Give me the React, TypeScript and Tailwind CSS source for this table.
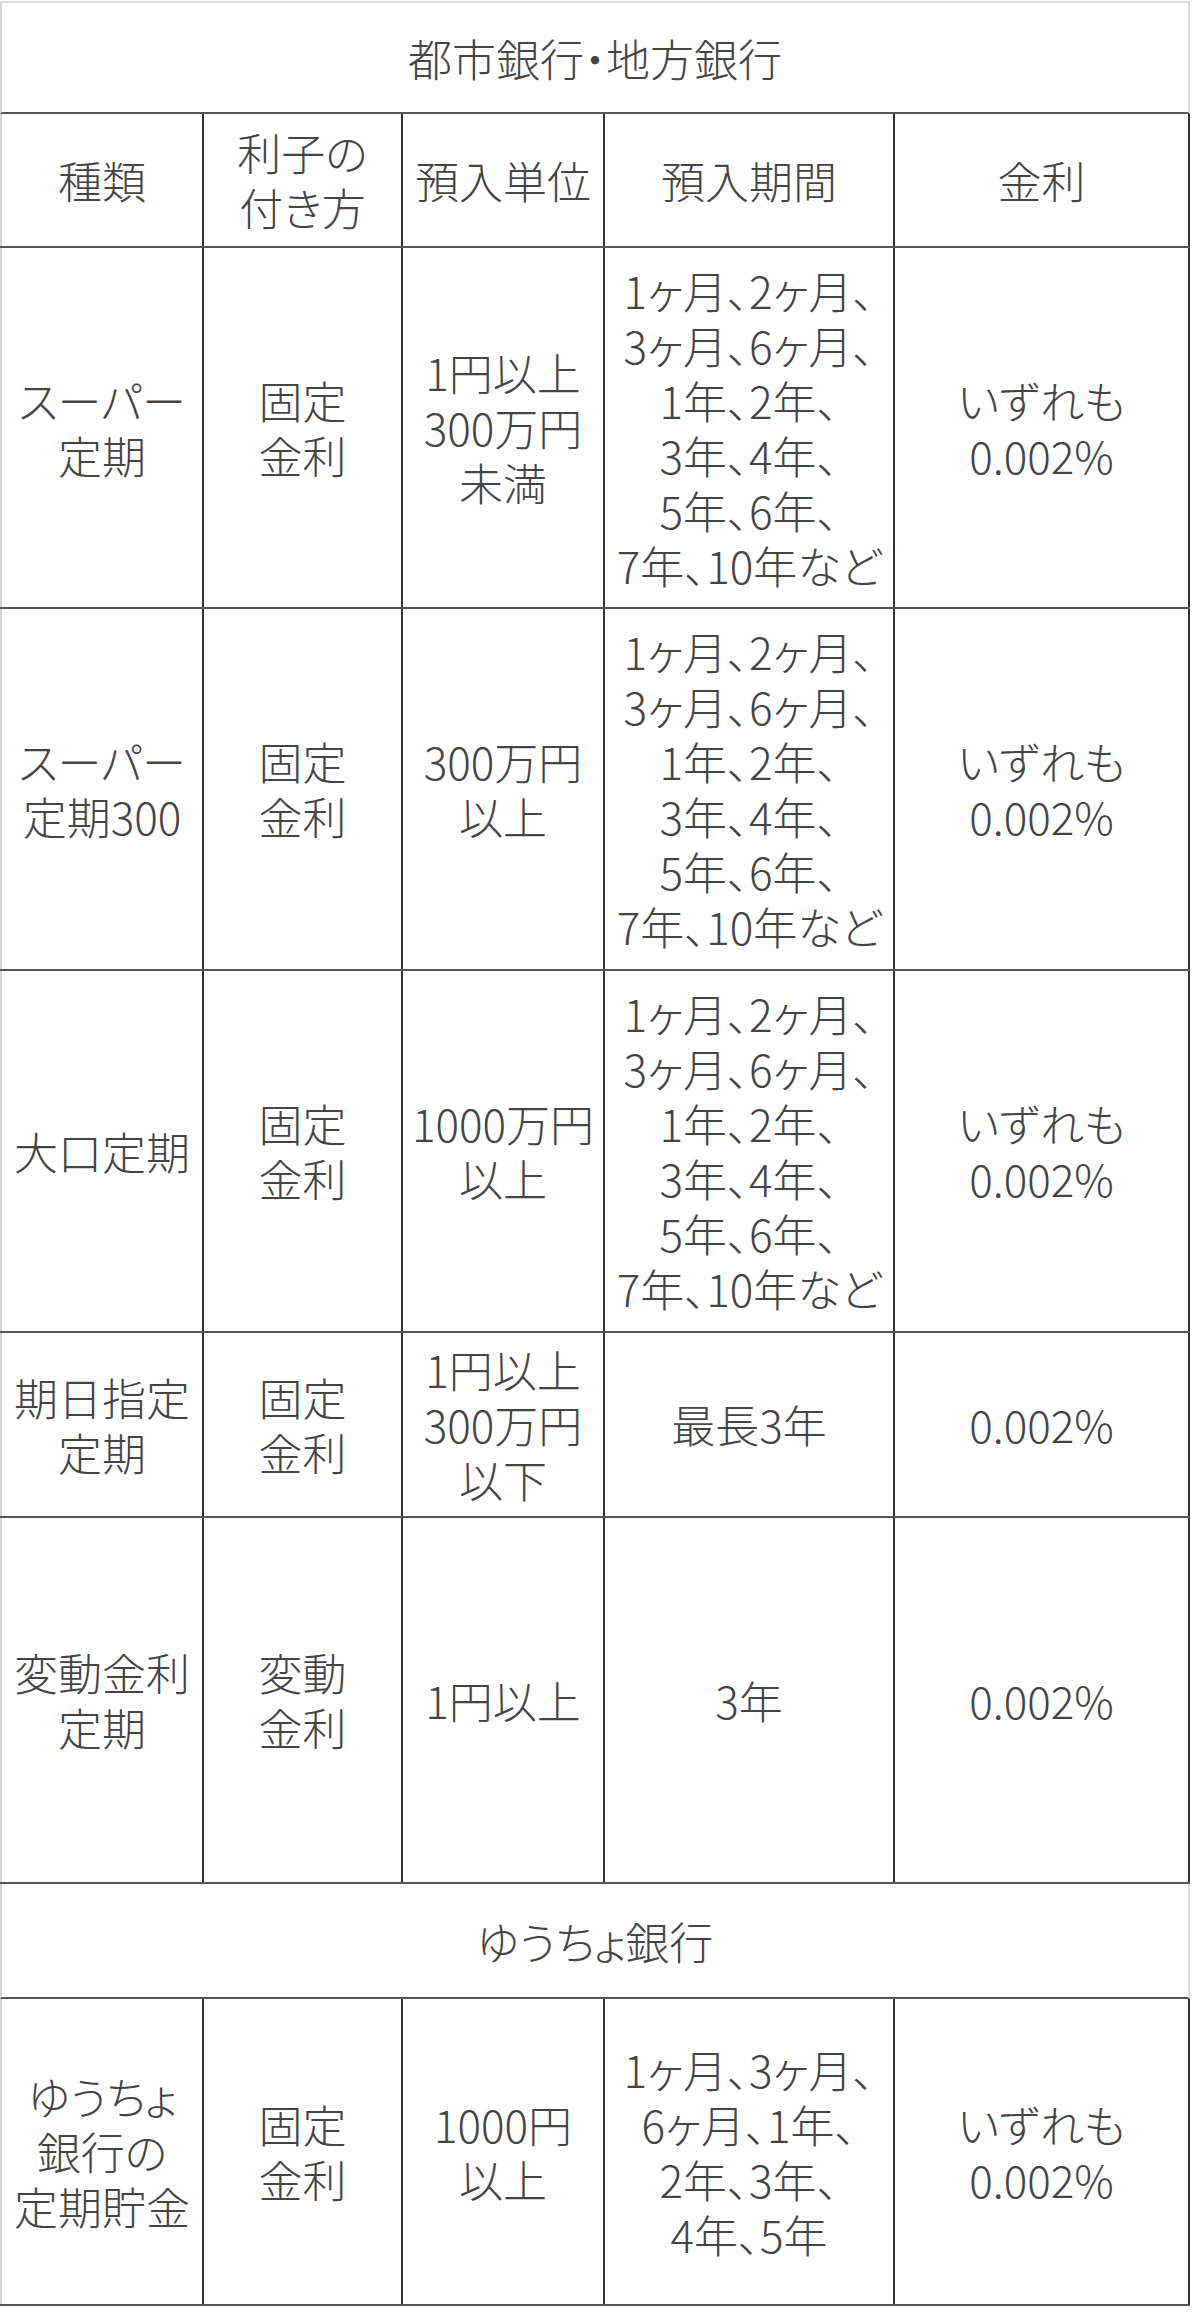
import React from 'react';

const cols = [
  'w-[202px] border-l-2 border-l-[#d4d4d4]',
  'w-[199px] border-l-2 border-l-[#333]',
  'w-[202px] border-l-2 border-l-[#333]',
  'w-[290px] border-l-2 border-l-[#333]',
  'w-[297px] border-l-2 border-r-2 border-l-[#333] border-r-[#333]',
];

type Row = { h: string; cells: string[][] };

const periods = [
  '1ヶ月、2ヶ月、',
  '3ヶ月、6ヶ月、',
  '1年、2年、',
  '3年、4年、',
  '5年、6年、',
  '7年、10年など',
];

const cityRows: Row[] = [
  {
    h: 'h-[134px]',
    cells: [['種類'], ['利子の', '付き方'], ['預入単位'], ['預入期間'], ['金利']],
  },
  {
    h: 'h-[361px]',
    cells: [['スーパー', '定期'], ['固定', '金利'], ['1円以上', '300万円', '未満'], periods, ['いずれも', '0.002%']],
  },
  {
    h: 'h-[362px]',
    cells: [['スーパー', '定期300'], ['固定', '金利'], ['300万円', '以上'], periods, ['いずれも', '0.002%']],
  },
  {
    h: 'h-[362px]',
    cells: [['大口定期'], ['固定', '金利'], ['1000万円', '以上'], periods, ['いずれも', '0.002%']],
  },
  {
    h: 'h-[185px]',
    cells: [['期日指定', '定期'], ['固定', '金利'], ['1円以上', '300万円', '以下'], ['最長3年'], ['0.002%']],
  },
  {
    h: 'h-[366px]',
    cells: [['変動金利', '定期'], ['変動', '金利'], ['1円以上'], ['3年'], ['0.002%']],
  },
];

const yuchoRow: Row = {
  h: 'h-[307px]',
  cells: [
    ['ゆうちょ', '銀行の', '定期貯金'],
    ['固定', '金利'],
    ['1000円', '以上'],
    ['1ヶ月、3ヶ月、', '6ヶ月、1年、', '2年、3年、', '4年、5年'],
    ['いずれも', '0.002%'],
  ],
};

function TitleRow({ text, h }: { text: string; h: string }) {
  return (
    <div
      className={`${h} flex items-center justify-center border-l-2 border-r-2 border-b-2 border-l-[#d4d4d4] border-r-[#dcdcdc] border-b-[#555]`}
    >
      {text}
    </div>
  );
}

function DataRow({ row }: { row: Row }) {
  return (
    <div className={`${row.h} flex border-b-2 border-b-[#555]`}>
      {row.cells.map((lines, i) => (
        <div key={i} className={`${cols[i]} flex flex-col items-center justify-center text-center`}>
          {lines.map((l, j) => (
            <div key={j} className="whitespace-nowrap leading-[55px]">
              {l}
            </div>
          ))}
        </div>
      ))}
    </div>
  );
}

export default function App() {
  return (
    <div className="min-h-screen w-[1200px] bg-white pt-[1px] text-[44px] font-light text-[#444] font-['Noto_Sans_CJK_JP','Noto_Sans',sans-serif] [font-feature-settings:'palt']">
      <div className="w-[1190px] border-t-2 border-t-[#dcdcdc]">
        <TitleRow text="都市銀行・地方銀行" h="h-[111px]" />
        {cityRows.map((r, i) => (
          <DataRow key={i} row={r} />
        ))}
        <TitleRow text="ゆうちょ銀行" h="h-[115px]" />
        <DataRow row={yuchoRow} />
      </div>
    </div>
  );
}
